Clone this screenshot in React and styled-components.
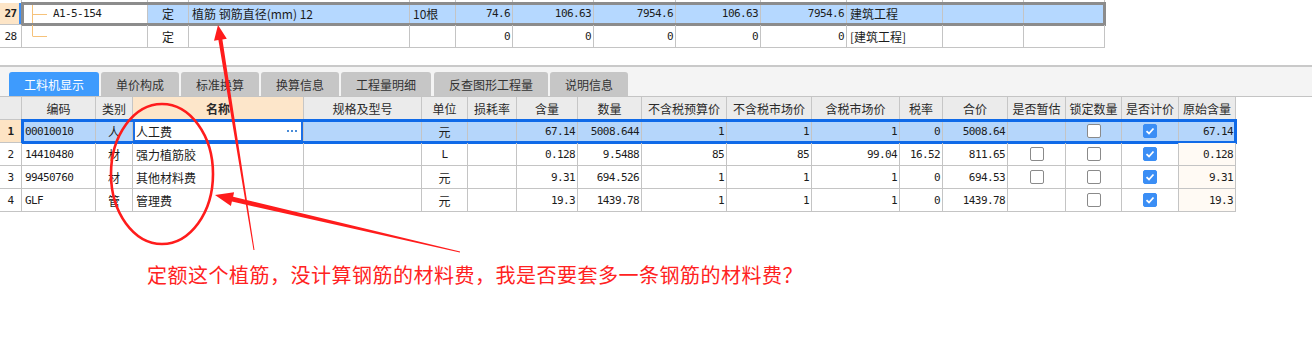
import React from "react";
import styled, { createGlobalStyle } from "styled-components";

const GlobalStyle = createGlobalStyle`
  html, body {
    margin: 0;
    padding: 0;
    background: #fff;
  }
  body {
    font-family: "Noto Sans CJK SC", "Noto Sans", sans-serif;
  }
  * {
    box-sizing: border-box;
  }
`;

const Page = styled.div`
  position: relative;
  width: 1312px;
  height: 346px;
  overflow: hidden;
  background: #fff;
`;

const Grid = styled.div`
  display: flex;
  flex-direction: column;
`;

const Row = styled.div`
  display: flex;
  height: ${(p) => p.$h}px;
`;

const RowBody = styled.div`
  display: flex;
  outline: ${(p) => (p.$outline ? `${p.$ow || 2}px solid ${p.$outline}` : "none")};
  outline-offset: -${(p) => (p.$ow ? p.$ow - 1 : 1)}px;
`;

const Cell = styled.div`
  flex: 0 0 ${(p) => p.$w}px;
  width: ${(p) => p.$w}px;
  display: flex;
  align-items: center;
  justify-content: ${(p) =>
    p.$align === "right" ? "flex-end" : p.$align === "center" ? "center" : "flex-start"};
  padding: 0 ${(p) => (p.$align === "right" ? 2 : 3)}px;
  border-right: 1px solid #c4c4c4;
  border-bottom: ${(p) => (p.$noBottom ? "none" : "1px solid #c4c4c4")};
  background: ${(p) => p.$bg || "transparent"};
  font-family: ${(p) =>
    p.$mono
      ? '"DejaVu Sans Mono", "Noto Sans CJK SC", monospace'
      : '"Noto Sans CJK SC", "Noto Sans", sans-serif'};
  font-size: ${(p) => (p.$mono ? "11px" : "12px")};
  letter-spacing: ${(p) => (p.$mono ? "-0.6px" : "0")};
  font-weight: ${(p) => (p.$bold ? 700 : 400)};
  color: #1c1c1c;
  white-space: nowrap;
  overflow: hidden;
`;

const NameEdit = styled(Cell)`
  background: #fff;
  box-shadow: inset 0 0 0 2px #1b6fe6;
  justify-content: space-between;
  padding: 0 5px 0 3px;
`;

const HeadCell = styled(Cell)`
  justify-content: center;
  background: ${(p) => p.$bg || "#ebebeb"};
  border-color: #c6c6c6;
  color: #2a2a2a;
`;

const TreeCell = styled(Cell)`
  padding: 0;
  gap: 5px;
`;

const TabBar = styled.div`
  margin-top: 17px;
  height: 32px;
  border-top: 2px solid #c9c9c9;
  border-bottom: 1px solid #c4c4c4;
  background: #f4f4f4;
  padding: 5px 0 0 9px;
  display: flex;
  align-items: flex-end;
  gap: 2px;
`;

const Tab = styled.div`
  height: 24px;
  padding: 0 15px;
  margin-right: ${(p) => p.$extra || 0}px;
  display: flex;
  align-items: center;
  border-radius: 3px 3px 0 0;
  font-size: 12px;
  background: ${(p) => (p.$active ? "#3e9bfd" : "#c6c6c6")};
  color: ${(p) => (p.$active ? "#fff" : "#333")};
`;

const Box = styled.span`
  width: 14px;
  height: 14px;
  border-radius: 2px;
  border: 1px solid ${(p) => (p.$on ? "#3b8ef5" : "#8a8a8a")};
  background: ${(p) => (p.$on ? "#3b8ef5" : "#fff")};
  display: inline-flex;
  align-items: center;
  justify-content: center;
`;

const Note = styled.div`
  margin-top: 51px;
  padding-left: 147px;
  font-size: 20px;
  line-height: 24px;
  letter-spacing: 0.5px;
  color: #ff2222;
  font-family: "Noto Sans CJK SC", sans-serif;
`;

const Overlay = styled.svg`
  position: absolute;
  left: 0;
  top: 0;
  pointer-events: none;
`;

const TOP_W = [22, 126, 41, 221, 46, 57, 81, 82, 85, 86, 96, 81, 81];
const MAIN_W = [22, 74, 37, 171, 118, 46, 49, 61, 64, 85, 85, 88, 43, 65, 58, 56, 57, 57];

const Tree = ({ last }) => (
  <svg width="26" height="22" viewBox="0 0 26 22">
    <line x1="10.5" y1="0" x2="10.5" y2={last ? 11 : 22} stroke="#f6c27a" />
    <line x1="10.5" y1="11.5" x2="25" y2="11.5" stroke="#f6c27a" />
  </svg>
);

const CheckBox = ({ on }) => (
  <Box $on={on}>
    {on && (
      <svg width="10" height="10" viewBox="0 0 10 10">
        <polyline points="1.5,5.2 4,7.5 8.5,2.5" fill="none" stroke="#fff" strokeWidth="1.8" />
      </svg>
    )}
  </Box>
);

const Dots = () => (
  <svg width="11" height="3" viewBox="0 0 11 3">
    <rect x="0" y="0" width="2" height="2" fill="#4a8cd8" />
    <rect x="4" y="0" width="2" height="2" fill="#4a8cd8" />
    <rect x="8" y="0" width="2" height="2" fill="#4a8cd8" />
  </svg>
);

const TABS = ["工料机显示", "单价构成", "标准换算", "换算信息", "工程量明细", "反查图形工程量", "说明信息"];

const HEAD = ["", "编码", "类别", "名称", "规格及型号", "单位", "损耗率", "含量", "数量", "不含税预算价", "不含税市场价", "含税市场价", "税率", "合价", "是否暂估", "锁定数量", "是否计价", "原始含量"];

const ROWS = [
  ["00010010", "人", "人工费", "", "元", "", "67.14", "5008.644", "1", "1", "1", "0", "5008.64", null, false, true, "67.14"],
  ["14410480", "材", "强力植筋胶", "", "L", "", "0.128", "9.5488", "85", "85", "99.04", "16.52", "811.65", false, false, true, "0.128"],
  ["99450760", "材", "其他材料费", "", "元", "", "9.31", "694.526", "1", "1", "1", "0", "694.53", false, false, true, "9.31"],
  ["GLF", "管", "管理费", "", "元", "", "19.3", "1439.78", "1", "1", "1", "0", "1439.78", null, false, true, "19.3"],
];

const TopTable = () => (
  <Grid>
    <Row $h={3}>
      {TOP_W.map((w, i) => (
        <Cell key={i} $w={w} $noBottom />
      ))}
    </Row>
    <Row $h={22}>
      <Cell $w={22} $align="center" $bg="#fde5c7" $mono $bold style={{ boxShadow: "inset -2px 0 0 #3b8ef5" }}>
        27
      </Cell>
      <RowBody $outline="#8c8c8c" $ow={3}>
        <TreeCell $w={126} $mono>
          <Tree />
          A1-5-154
        </TreeCell>
        <Cell $w={41} $align="center" $bg="#b5d8ff">定</Cell>
        <Cell $w={221} $bg="#b5d8ff">植筋 钢筋直径(mm) 12</Cell>
        <Cell $w={46} $bg="#b5d8ff">10根</Cell>
        <Cell $w={57} $align="right" $mono $bg="#b5d8ff">74.6</Cell>
        <Cell $w={81} $align="right" $mono $bg="#b5d8ff">106.63</Cell>
        <Cell $w={82} $align="right" $mono $bg="#b5d8ff">7954.6</Cell>
        <Cell $w={85} $align="right" $mono $bg="#b5d8ff">106.63</Cell>
        <Cell $w={86} $align="right" $mono $bg="#b5d8ff">7954.6</Cell>
        <Cell $w={96} $bg="#b5d8ff">建筑工程</Cell>
        <Cell $w={81} $bg="#b5d8ff" />
        <Cell $w={81} $bg="#b5d8ff" />
      </RowBody>
    </Row>
    <Row $h={23}>
      <Cell $w={22} $align="center" $mono>28</Cell>
      <TreeCell $w={126}>
        <Tree last />
      </TreeCell>
      <Cell $w={41} $align="center">定</Cell>
      <Cell $w={221} />
      <Cell $w={46} />
      {[57, 81, 82, 85, 86].map((w, i) => (
        <Cell key={i} $w={w} $align="right" $mono>0</Cell>
      ))}
      <Cell $w={96}>[建筑工程]</Cell>
      <Cell $w={81} />
      <Cell $w={81} />
    </Row>
  </Grid>
);

const alignOf = (i) => {
  if (i === 0) return "left";
  if (i === 1 || i === 4) return "center";
  if (i === 2 || i === 3 || i === 5) return "left";
  return "right";
};

const MainTable = () => (
  <Grid>
    <Row $h={23}>
      {HEAD.map((h, i) => (
        <HeadCell key={i} $w={MAIN_W[i]} $bg={i === 3 ? "#fde6ca" : undefined} $bold={i === 3}>
          {h}
        </HeadCell>
      ))}
    </Row>
    {ROWS.map((r, ri) => {
      const sel = ri === 0;
      const bg = sel ? "#b5d6fb" : undefined;
      return (
        <Row key={ri} $h={23}>
          <Cell $w={22} $align="center" $mono $bold={sel} $bg={sel ? "#fde4c4" : "#fff"}>
            {ri + 1}
          </Cell>
          <RowBody $outline={sel ? "#0f6ae8" : null} $ow={3}>
            {r.map((v, ci) => {
              const w = MAIN_W[ci + 1];
              if (sel && ci === 2) {
                return (
                  <NameEdit key={ci} $w={w}>
                    {v}
                    <Dots />
                  </NameEdit>
                );
              }
              if (typeof v === "boolean" || v === null) {
                return (
                  <Cell key={ci} $w={w} $align="center" $bg={bg}>
                    {v !== null && <CheckBox on={v} />}
                  </Cell>
                );
              }
              const al = alignOf(ci);
              const mono = ci === 0 || al === "right" || v === "L";
              const last = ci === r.length - 1;
              return (
                <Cell key={ci} $w={w} $align={al} $mono={mono} $bg={last && !sel ? "#fffaf4" : bg}>
                  {v}
                </Cell>
              );
            })}
          </RowBody>
        </Row>
      );
    })}
  </Grid>
);

const Annotations = () => (
  <Overlay width="1312" height="346" viewBox="0 0 1312 346">
    <ellipse cx="162" cy="174" rx="51" ry="70" fill="none" stroke="#ff1c1c" strokeWidth="2.6" />
    <polygon
      fill="#ff1c1c"
      points="218,25 226.8,38.8 222.4,39.5 254.5,249.9 253.5,250.1 218.4,40.1 214,40.8"
    />
    <polygon
      fill="#ff1c1c"
      points="215,195 234.1,192.3 233.1,196.7 460.1,251.6 459.9,252.4 231.9,201.5 230.9,205.9"
    />
  </Overlay>
);

export default function App() {
  return (
    <Page>
      <GlobalStyle />
      <TopTable />
      <TabBar>
        {TABS.map((t, i) => (
          <Tab key={t} $active={i === 0} $extra={i === 4 ? 1 : 0}>
            {t}
          </Tab>
        ))}
      </TabBar>
      <MainTable />
      <Note>定额这个植筋，没计算钢筋的材料费，我是否要套多一条钢筋的材料费？</Note>
      <Annotations />
    </Page>
  );
}
